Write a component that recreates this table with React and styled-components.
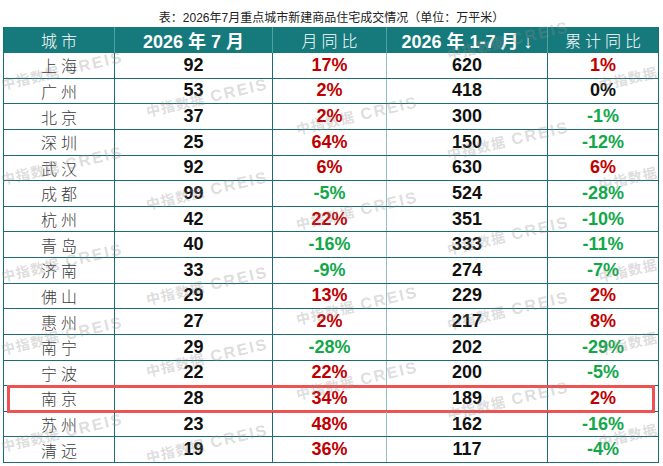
import React from "react";
import styled, { createGlobalStyle } from "styled-components";

const Global = createGlobalStyle`
  html, body { margin: 0; padding: 0; background: #fff; }
  * { box-sizing: border-box; }
`;

const Page = styled.div`
  position: relative;
  width: 663px;
  height: 466px;
  overflow: hidden;
  background: #fff;
`;

const Title = styled.div`
  padding-top: 10px;
  height: 27px;
  line-height: 17px;
  text-align: center;
  font-family: "Liberation Sans", "Noto Sans CJK SC", sans-serif;
  font-size: 12px;
  color: #222;
`;

const Table = styled.div`
  position: relative;
  margin-left: 3px;
  width: 656px;
  border-left: 1px solid #1d6b74;
  border-right: 1px solid #1d6b74;
`;

const COLS = "111px 158px 114px 161px 110px";

const HeadRow = styled.div`
  display: grid;
  grid-template-columns: ${COLS};
  height: 26px;
  background: #167a7d;
`;

const HeadCell = styled.div`
  display: flex;
  align-items: center;
  justify-content: center;
  color: #fff;
  font-family: ${(p) =>
    p.$num ? '"Liberation Sans", "Noto Sans CJK SC", sans-serif' : '"Noto Sans CJK SC", sans-serif'};
  font-weight: ${(p) => (p.$num ? 700 : 300)};
  font-size: ${(p) => (p.$num ? "18px" : "16px")};
  letter-spacing: ${(p) => (p.$num ? "0" : "4px")};
  padding-left: ${(p) => (p.$num ? "0" : "4px")};
  white-space: pre;
  border-right: ${(p) => (p.$last ? "none" : "1px solid rgba(255,255,255,0.28)")};
`;

const Row = styled.div`
  position: relative;
  display: grid;
  grid-template-columns: ${COLS};
  height: 25.64px;
  border-bottom: 1px solid #1d6b74;
  &::after {
    content: "";
    display: ${(p) => (p.$highlight ? "block" : "none")};
    position: absolute;
    left: 3px;
    right: 3px;
    top: -1px;
    bottom: -2px;
    border: 3px solid #f05252;
    pointer-events: none;
  }
`;

const Cell = styled.div`
  display: flex;
  align-items: center;
  justify-content: center;
  border-right: ${(p) => (p.$sep === "none" ? "none" : p.$sep === "light" ? "1px solid #8cc2c4" : "1px solid #1d6b74")};
`;

const City = styled(Cell)`
  font-family: "Noto Sans CJK SC", sans-serif;
  font-weight: 300;
  font-size: 16px;
  letter-spacing: 4px;
  padding-left: 4px;
  color: #3a3a3a;
`;

const Num = styled(Cell)`
  font-family: "Liberation Sans", Arial, sans-serif;
  font-weight: 700;
  font-size: 18px;
  color: ${(p) => p.$color || "#111"};
`;

const Watermark = styled.span`
  position: absolute;
  left: ${(p) => p.$x}px;
  top: ${(p) => p.$y}px;
  transform: translate(-50%, -50%) rotate(-13deg);
  white-space: nowrap;
  pointer-events: none;
  color: rgba(140, 140, 140, 0.3);
  font-family: "Noto Sans CJK SC", sans-serif;
  font-weight: 700;
  font-size: 14px;
  letter-spacing: 1px;
  & b {
    font-family: "Liberation Sans", Arial, sans-serif;
    font-weight: 700;
    font-size: 16px;
    letter-spacing: 2px;
    margin-left: 6px;
  }
`;

const data = [
  ["上海", "92", "17%", "620", "1%"],
  ["广州", "53", "2%", "418", "0%"],
  ["北京", "37", "2%", "300", "-1%"],
  ["深圳", "25", "64%", "150", "-12%"],
  ["武汉", "92", "6%", "630", "6%"],
  ["成都", "99", "-5%", "524", "-28%"],
  ["杭州", "42", "22%", "351", "-10%"],
  ["青岛", "40", "-16%", "333", "-11%"],
  ["济南", "33", "-9%", "274", "-7%"],
  ["佛山", "29", "13%", "229", "2%"],
  ["惠州", "27", "2%", "217", "8%"],
  ["南宁", "29", "-28%", "202", "-29%"],
  ["宁波", "22", "22%", "200", "-5%"],
  ["南京", "28", "34%", "189", "2%"],
  ["苏州", "23", "48%", "162", "-16%"],
  ["清远", "19", "36%", "117", "-4%"],
];

const pctColor = (v) => {
  if (v.startsWith("-")) return "#12a84a";
  if (v === "0%") return "#111";
  return "#c00000";
};

const marks = [
  [62, 70], [62, 165], [62, 262], [62, 335], [62, 432],
  [207, 97], [207, 190], [207, 285], [207, 357], [207, 443],
  [357, 115], [357, 210], [357, 305], [357, 380],
  [508, 40], [508, 140], [508, 235], [508, 310], [508, 400],
];

const edgeMarks = [
  [628, 78], [628, 178], [628, 270], [628, 343], [628, 435],
];

export default function App() {
  return (
    <Page>
      <Global />
      <Title>表：2026年7月重点城市新建商品住宅成交情况（单位：万平米）</Title>
      <Table>
        <HeadRow>
          <HeadCell>城市</HeadCell>
          <HeadCell $num>{"2026 年 7 月"}</HeadCell>
          <HeadCell>月同比</HeadCell>
          <HeadCell $num>{"2026 年 1-7 月 ↓"}</HeadCell>
          <HeadCell $last>累计同比</HeadCell>
        </HeadRow>
        {data.map((r) => (
          <Row key={r[0]} $highlight={r[0] === "南京"}>
            <City>{r[0]}</City>
            <Num>{r[1]}</Num>
            <Num $sep="light" $color={pctColor(r[2])}>{r[2]}</Num>
            <Num>{r[3]}</Num>
            <Num $sep="none" $color={pctColor(r[4])}>{r[4]}</Num>
          </Row>
        ))}
      </Table>
      {marks.map(([x, y], i) => (
        <Watermark key={i} $x={x} $y={y}>
          中指数据<b>CREIS</b>
        </Watermark>
      ))}
      {edgeMarks.map(([x, y], i) => (
        <Watermark key={"e" + i} $x={x} $y={y}>
          中指数据
        </Watermark>
      ))}
    </Page>
  );
}
